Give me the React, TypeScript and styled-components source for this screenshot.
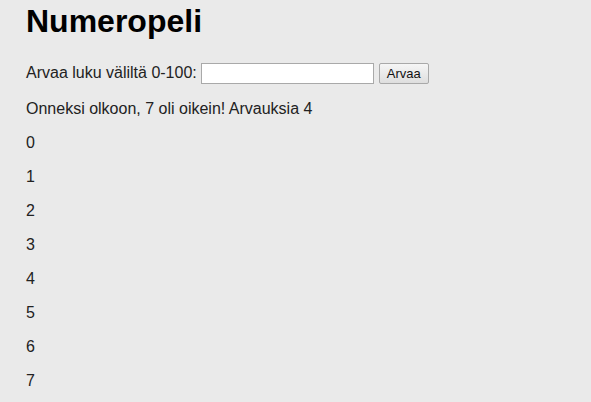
import styled, { createGlobalStyle } from "styled-components";

const GlobalStyle = createGlobalStyle`
  html, body {
    margin: 0;
    padding: 0;
    background: #eaeaea;
  }
  body {
    font-family: "Liberation Sans", Arial, sans-serif;
    font-size: 16px;
    color: #222;
  }
`;

const Page = styled.div`
  padding: 3px 26px 0;
`;

const Title = styled.h1`
  margin: 0 0 22px;
  font-size: 32px;
  font-weight: bold;
  color: #000;
`;

const GuessRow = styled.form`
  display: flex;
  align-items: center;
  margin: 0 0 16px;
  height: 22px;
`;

const Label = styled.label`
  margin-right: 4px;
`;

const Input = styled.input`
  box-sizing: border-box;
  width: 173px;
  height: 21px;
  border: 1px solid #a9a9a9;
  background: #fff;
  padding: 1px 2px;
  margin: 0 5px 0 0;
  font-family: inherit;
`;

const Button = styled.button`
  box-sizing: border-box;
  height: 21px;
  width: 50px;
  border: 1px solid #a9a9a9;
  border-radius: 2px;
  background: linear-gradient(#f6f6f6, #dedede);
  font-family: "Liberation Sans", Arial, sans-serif;
  font-size: 13px;
  color: #111;
  padding: 0 6px;
`;

const Line = styled.p`
  margin: 16px 0;
`;

const guesses = [0, 1, 2, 3, 4, 5, 6, 7];

export default function App() {
  return (
    <>
      <GlobalStyle />
      <Page>
        <Title>Numeropeli</Title>
        <GuessRow onSubmit={(e) => e.preventDefault()}>
          <Label>Arvaa luku väliltä 0-100:</Label>
          <Input type="text" />
          <Button type="submit">Arvaa</Button>
        </GuessRow>
        <Line>Onneksi olkoon, 7 oli oikein! Arvauksia 4</Line>
        {guesses.map((g) => (
          <Line key={g}>{g}</Line>
        ))}
      </Page>
    </>
  );
}
